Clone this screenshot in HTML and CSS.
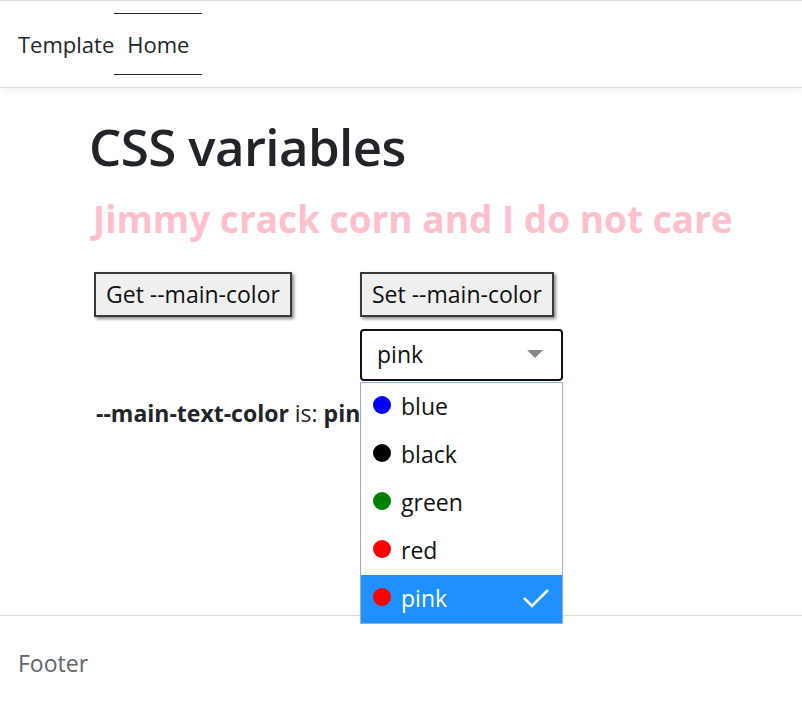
FILE: index.html
```html
<!DOCTYPE html>
<html>
<head>
<meta charset="utf-8">
<link rel="stylesheet" href="styles.css">
</head>
<body>
<header class="top">
  <nav class="nav">
    <span class="brand">Template</span>
    <a class="nav-link" href="#">Home</a>
  </nav>
</header>
<main class="main">
  <h1 class="title">CSS variables</h1>
  <h2 class="tagline">Jimmy crack corn and I do not care</h2>
  <div class="controls">
    <div class="col">
      <button class="btn">Get --main-color</button>
    </div>
    <div class="col">
      <button class="btn">Set --main-color</button>
      <div class="picker">
        <div class="select">
          <span>pink</span>
          <span class="caret"></span>
        </div>
        <ul class="menu">
          <li class="opt"><span class="dot dot-blue"></span>blue</li>
          <li class="opt"><span class="dot dot-black"></span>black</li>
          <li class="opt"><span class="dot dot-green"></span>green</li>
          <li class="opt"><span class="dot dot-red"></span>red</li>
          <li class="opt opt-sel"><span class="dot dot-red"></span>pink
            <svg class="check" width="28" height="22" viewBox="0 0 28 22"><path d="M2 11 L10 19 L26 3" fill="none" stroke="#fff" stroke-width="2.6"/></svg>
          </li>
        </ul>
      </div>
    </div>
  </div>
  <p class="result"><b>--main-text-color</b> is: <b>pink</b></p>
</main>
<footer class="foot">Footer</footer>
</body>
</html>
```
FILE: styles.css
```css
* { box-sizing: border-box; }
body {
  margin: 0;
  font-family: "Open Sans", "Noto Sans", sans-serif;
  color: #212529;
  font-size: 23px;
  background: #fff;
}
.top {
  height: 88px;
  border-top: 1px solid #dedede;
  border-bottom: 1px solid #dedede;
  box-shadow: 0 3px 8px rgba(0,0,0,0.05);
}
.nav {
  display: flex;
  align-items: center;
  height: 100%;
  padding-left: 18px;
  font-size: 22px;
}
.brand { color: #212529; }
.nav-link {
  color: #212529;
  text-decoration: none;
  padding: 0 13px;
  height: 62px;
  display: flex;
  align-items: center;
  border-top: 1px solid #222;
  border-bottom: 1px solid #222;
}
.main {
  padding: 0 0 0 91px;
  height: 527px;
}
.title {
  margin: 0;
  padding-top: 22px;
  font-size: 51px;
  font-weight: 600;
  line-height: 72px;
  margin-left: -2px;
  letter-spacing: -0.6px;
}
.tagline {
  margin: 0;
  margin-top: 11px;
  color: pink;
  font-size: 37px;
  font-weight: 700;
  line-height: 52px;
  margin-left: 2px;
}
.controls {
  display: flex;
  margin-top: 27px;
  margin-left: 3px;
}
.col { width: 266px; display: flex; flex-direction: column; align-items: flex-start; }
.btn {
  font: inherit;
  font-size: 23px;
  color: #111;
  background: #efefef;
  border: 2px solid #3a3a3a;
  box-shadow: 2px 2px 3px rgba(0,0,0,0.45);
  padding: 0 10px;
  height: 45px;
  line-height: 1;
}
.picker { position: relative; margin-top: 12px; }
.select {
  width: 203px;
  height: 52px;
  border: 2px solid #111;
  border-radius: 4px;
  display: flex;
  align-items: center;
  justify-content: space-between;
  padding: 0 18px 2px 15px;
  color: #111;
}
.caret {
  width: 0; height: 0;
  border-left: 8px solid transparent;
  border-right: 8px solid transparent;
  border-top: 8px solid #888;
}
.menu {
  position: absolute;
  top: 53px;
  left: 0;
  width: 203px;
  margin: 0;
  padding: 0;
  list-style: none;
  background: #fff;
  border: 1px solid #8ab2e6;
}
.opt {
  height: 48px;
  display: flex;
  align-items: center;
  padding-left: 12px;
  padding-bottom: 2px;
  color: #111;
}
.opt-sel { background: #1e90ff; color: #fff; }
.dot {
  width: 18px; height: 18px;
  border-radius: 50%;
  margin-right: 10px;
  margin-top: -2px;
}
.dot-blue { background: #0000ff; }
.dot-black { background: #000; }
.dot-green { background: #008000; }
.dot-red { background: #ff0000; }
.check { margin-left: auto; margin-right: 12px; }
.result {
  margin: 16px 0 0 5px;
}
.foot {
  border-top: 1px solid #dedede;
  height: 91px;
  padding-left: 18px;
  display: flex;
  align-items: center;
  color: #5f666d;
  padding-top: 4px;
}
```
